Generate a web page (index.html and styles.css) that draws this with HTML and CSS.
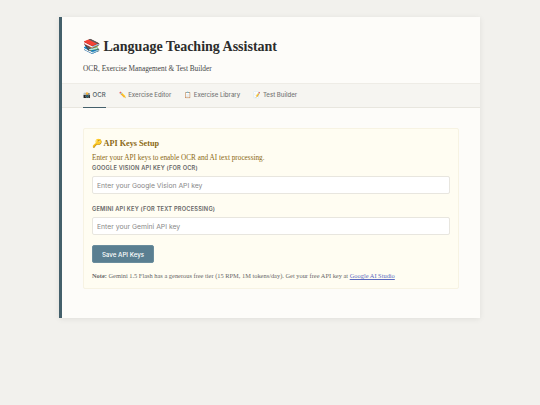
FILE: index.html
```html
<!DOCTYPE html>
<html lang="en">
<head>
    <meta charset="UTF-8">
    <meta name="viewport" content="width=device-width, initial-scale=1.0">
    <title>Language Teaching Assistant</title>
    <link rel="stylesheet" href="styles.css">
</head>
<body>
    <div class="container">
        <header class="header">
            <h1>📚 Language Teaching Assistant</h1>
            <p class="subtitle">OCR, Exercise Management &amp; Test Builder</p>
        </header>

        <nav class="tabs">
            <button class="tab active">📸 OCR</button>
            <button class="tab">✏️ Exercise Editor</button>
            <button class="tab">📋 Exercise Library</button>
            <button class="tab">📝 Test Builder</button>
        </nav>

        <main class="content">
            <section class="api-setup">
                <h3>🔑 API Keys Setup</h3>
                <p class="intro">Enter your API keys to enable OCR and AI text processing.</p>
                <div class="form-group">
                    <label for="visionKey">Google Vision API Key (for OCR)</label>
                    <input type="text" id="visionKey" placeholder="Enter your Google Vision API key">
                </div>
                <div class="form-group">
                    <label for="geminiKey">Gemini API Key (for text processing)</label>
                    <input type="text" id="geminiKey" placeholder="Enter your Gemini API key">
                </div>
                <button class="save-btn">Save API Keys</button>
                <p class="note"><strong>Note:</strong> Gemini 1.5 Flash has a generous free tier (15 RPM, 1M tokens/day). Get your free API key at <a href="#">Google AI Studio</a></p>
            </section>
        </main>
    </div>
</body>
</html>
```

FILE: styles.css
```css
* {
    margin: 0;
    padding: 0;
    box-sizing: border-box;
}

body {
    font-family: 'Inter', sans-serif;
    background: #f2f1ed;
    min-height: 100vh;
    padding-right: 1px;
    color: #2c2c2c;
}

.container {
    width: 421px;
    margin: 17px auto 0;
    background: #fdfcf9;
    border-left: 3px solid #44606b;
    box-shadow: 0 1px 6px rgba(0,0,0,0.08);
}

.header {
    height: 66px;
    padding: 21px 21px 0;
}

h1 {
    font-family: 'Liberation Serif', serif;
    font-size: 14px;
    line-height: 18px;
    font-weight: bold;
    color: #2c2c2c;
    margin-bottom: 8px;
}

.subtitle {
    font-family: 'Liberation Serif', serif;
    font-size: 7.3px;
    line-height: 10px;
    color: #444;
}

.tabs {
    display: flex;
    gap: 13px;
    height: 25px;
    padding: 0 21px;
    background: #f6f5f1;
    border-top: 1px solid #eeece6;
    border-bottom: 1px solid #e8e6df;
}

.tab {
    font-family: 'Inter', sans-serif;
    font-size: 6.05px;
    font-weight: 500;
    color: #777;
    background: none;
    border: none;
    border-bottom: 1px solid transparent;
    height: 24px;
    padding-bottom: 2px;
}

.tab.active {
    color: #4a5a60;
    border-bottom-color: #44606b;
}

.content {
    padding: 20px 21px 29px;
}

.api-setup {
    height: 161px;
    padding: 9px 8px;
    background: #fffdf2;
    border: 1px solid #f7f3e3;
    border-radius: 2px;
}

h3 {
    font-family: 'Liberation Serif', serif;
    font-size: 8.2px;
    line-height: 12px;
    color: #8b6914;
    margin-bottom: 3px;
}

.intro {
    font-family: 'Liberation Serif', serif;
    font-size: 7.25px;
    line-height: 10px;
    color: #8b6914;
}

.form-group {
    margin-bottom: 10px;
}

label {
    display: block;
    font-size: 5.7px;
    line-height: 10px;
    font-weight: 600;
    text-transform: uppercase;
    letter-spacing: 0.2px;
    color: #666;
    margin-bottom: 3px;
}

input {
    display: block;
    width: 100%;
    height: 18px;
    padding: 0 4px;
    font-family: 'Inter', sans-serif;
    font-size: 6.8px;
    background: white;
    border: 1px solid #e8e6df;
    border-radius: 2px;
}

input::placeholder {
    color: #888;
}

.save-btn {
    display: block;
    width: 62px;
    height: 18px;
    font-family: 'Inter', sans-serif;
    font-size: 6.2px;
    font-weight: 500;
    color: white;
    background: #5a7f91;
    border: 1px solid #6a8d9d;
    border-radius: 2px;
    margin-bottom: 8px;
}

.note {
    font-family: 'Liberation Serif', serif;
    font-size: 6.4px;
    line-height: 9px;
    color: #666;
}

.note a {
    color: #5c6bc0;
}
```
